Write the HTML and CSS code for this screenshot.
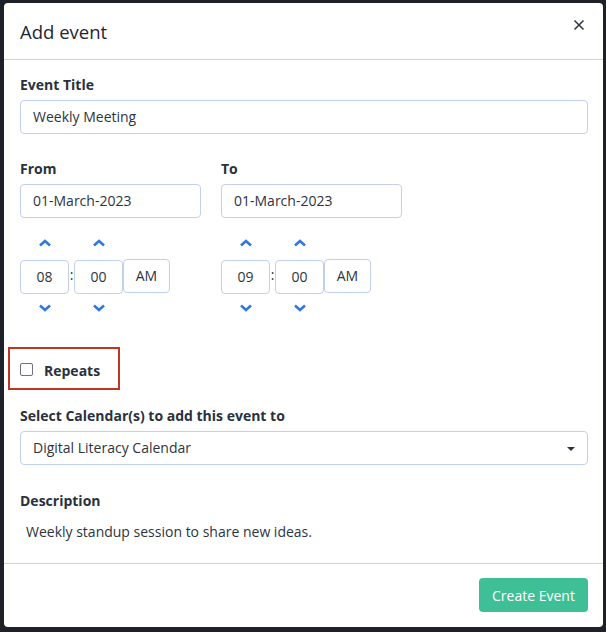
FILE: index.html
```html
<!DOCTYPE html>
<html>
<head>
<meta charset="utf-8">
<link rel="stylesheet" href="styles.css">
</head>
<body>
<div class="modal">
  <div class="modal-header">
    <h2 class="modal-title">Add event</h2>
    <button class="close-btn" aria-label="Close">
      <svg width="12" height="12" viewBox="0 0 12 12"><path d="M1.5 1.5 L10.5 10.5 M10.5 1.5 L1.5 10.5" stroke="#2d3440" stroke-width="1.5" fill="none"/></svg>
    </button>
  </div>
  <div class="modal-body">
    <label class="label">Event Title</label>
    <div class="input full">Weekly Meeting</div>

    <div class="dates">
      <div class="date-col">
        <label class="label">From</label>
        <div class="input date">01-March-2023</div>
        <div class="time">
          <div class="spin">
            <svg class="chev" width="14" height="8" viewBox="0 0 14 8"><path d="M2 6.5 L7 2 L12 6.5" stroke="#2f7ad8" stroke-width="2.6" fill="none"/></svg>
            <div class="tbox">08</div>
            <svg class="chev" width="14" height="8" viewBox="0 0 14 8"><path d="M2 1.5 L7 6 L12 1.5" stroke="#2f7ad8" stroke-width="2.6" fill="none"/></svg>
          </div>
          <span class="colon">:</span>
          <div class="spin">
            <svg class="chev" width="14" height="8" viewBox="0 0 14 8"><path d="M2 6.5 L7 2 L12 6.5" stroke="#2f7ad8" stroke-width="2.6" fill="none"/></svg>
            <div class="tbox">00</div>
            <svg class="chev" width="14" height="8" viewBox="0 0 14 8"><path d="M2 1.5 L7 6 L12 1.5" stroke="#2f7ad8" stroke-width="2.6" fill="none"/></svg>
          </div>
          <div class="tbox ampm">AM</div>
        </div>
      </div>
      <div class="date-col">
        <label class="label">To</label>
        <div class="input date">01-March-2023</div>
        <div class="time">
          <div class="spin">
            <svg class="chev" width="14" height="8" viewBox="0 0 14 8"><path d="M2 6.5 L7 2 L12 6.5" stroke="#2f7ad8" stroke-width="2.6" fill="none"/></svg>
            <div class="tbox">09</div>
            <svg class="chev" width="14" height="8" viewBox="0 0 14 8"><path d="M2 1.5 L7 6 L12 1.5" stroke="#2f7ad8" stroke-width="2.6" fill="none"/></svg>
          </div>
          <span class="colon">:</span>
          <div class="spin">
            <svg class="chev" width="14" height="8" viewBox="0 0 14 8"><path d="M2 6.5 L7 2 L12 6.5" stroke="#2f7ad8" stroke-width="2.6" fill="none"/></svg>
            <div class="tbox">00</div>
            <svg class="chev" width="14" height="8" viewBox="0 0 14 8"><path d="M2 1.5 L7 6 L12 1.5" stroke="#2f7ad8" stroke-width="2.6" fill="none"/></svg>
          </div>
          <div class="tbox ampm">AM</div>
        </div>
      </div>
    </div>

    <div class="repeats">
      <span class="checkbox"></span>
      <span class="repeats-label">Repeats</span>
    </div>

    <label class="label">Select Calendar(s) to add this event to</label>
    <div class="input full select">
      <span>Digital Literacy Calendar</span>
      <span class="caret"></span>
    </div>

    <label class="label desc-label">Description</label>
    <p class="desc">Weekly standup session to share new ideas.</p>
  </div>
  <div class="modal-footer">
    <button class="btn-primary">Create Event</button>
  </div>
</div>
</body>
</html>
```

FILE: styles.css
```css
* { box-sizing: border-box; }
html, body {
  margin: 0;
  padding: 0;
  background: #1e2128;
  font-family: "Open Sans", "Noto Sans", sans-serif;
  color: #2d3440;
}
body { padding: 3px 3px 5px 4px; }
.modal {
  width: 599px;
  height: 624px;
  background: #fff;
  border-radius: 4px;
  display: flex;
  flex-direction: column;
}
.modal-header {
  height: 57px;
  border-bottom: 1px solid #c9d5e4;
  display: flex;
  align-items: center;
  justify-content: space-between;
  padding: 0 18px 0 16px;
}
.modal-title {
  margin: 0;
  font-size: 18.5px;
  font-weight: 400;
  color: #1f2633;
  padding-top: 1px;
}
.close-btn {
  border: 0;
  background: none;
  padding: 0;
  width: 12px;
  height: 12px;
  margin-top: -13px;
  display: flex;
}
.modal-body {
  flex: 1;
  padding: 15px 15px 0 16px;
}
.label {
  display: block;
  font-size: 14px;
  font-weight: 700;
  line-height: 20px;
  color: #2a313d;
}
.input {
  height: 34px;
  border: 1px solid #c2d1e8;
  border-radius: 4px;
  font-size: 14px;
  line-height: 32px;
  padding: 0 12px;
  color: #2d3440;
  margin-top: 5px;
}
.full { width: 568px; }
.dates {
  display: flex;
  gap: 20px;
  margin-top: 25px;
}
.date-col { width: 181px; }
.date { width: 181px; }
.time {
  display: flex;
  align-items: center;
  margin-top: 21px;
}
.spin {
  display: flex;
  flex-direction: column;
  align-items: center;
}
.chev { display: block; }
.spin .tbox { margin: 13px 0 10px; }
.tbox {
  width: 49px;
  height: 34px;
  border: 1px solid #c2d1e8;
  border-radius: 4px;
  font-size: 14px;
  line-height: 32px;
  text-align: center;
  color: #2d3440;
}
.colon {
  width: 5px;
  text-align: center;
  font-size: 14px;
  color: #2d3440;
  padding-bottom: 2px;
}
.ampm { width: 47px; }
.repeats {
  width: 112px;
  height: 43px;
  margin: 35px 0 0 -12px;
  border: 2px solid #c23520;
  display: flex;
  align-items: center;
  padding: 3px 0 0 10px;
}
.checkbox {
  width: 13px;
  height: 13px;
  border: 1px solid #6b7280;
  border-radius: 2px;
  display: block;
  margin-top: -2px;
}
.repeats-label {
  font-size: 14px;
  font-weight: 700;
  margin-left: 11px;
  color: #2a313d;
}
.repeats + .label { margin-top: 16px; }
.select {
  display: flex;
  align-items: center;
  justify-content: space-between;
  padding-right: 12px;
}
.caret {
  width: 0;
  height: 0;
  border-left: 4px solid transparent;
  border-right: 4px solid transparent;
  border-top: 4px solid #2d3440;
  margin-top: 1px;
}
.desc-label { margin-top: 26px; }
.desc {
  margin: 11px 0 0 6px;
  font-size: 14px;
  line-height: 20px;
  color: #2d3440;
}
.modal-footer {
  height: 64px;
  border-top: 1px solid #c9d5e4;
  display: flex;
  justify-content: flex-end;
  align-items: flex-start;
  padding: 14px 15px 0 0;
}
.btn-primary {
  width: 109px;
  height: 34px;
  background: #3ebf96;
  color: #fff;
  border: 0;
  border-radius: 4px;
  font-family: "Open Sans", "Noto Sans", sans-serif;
  font-size: 14px;
}
```
